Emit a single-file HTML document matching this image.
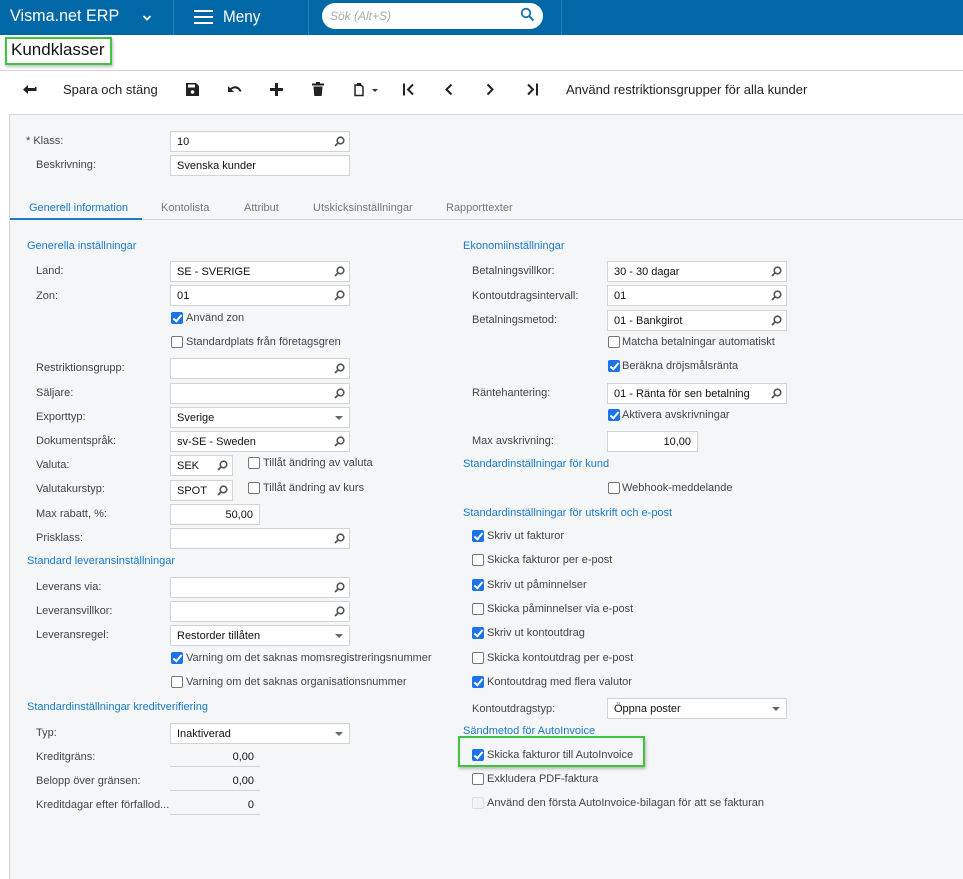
<!DOCTYPE html>
<html><head><meta charset="utf-8">
<style>
*{margin:0;padding:0;box-sizing:border-box}
body{width:963px;height:879px;overflow:hidden;background:#fff;font-family:"Liberation Sans",Arial,sans-serif;position:relative}
.a{position:absolute}
.top{left:0;top:0;width:963px;height:35px;background:#0168a7}
.l{position:absolute;font-size:11px;color:#444;white-space:nowrap;line-height:14px}
.h{position:absolute;font-size:11px;color:#1a7ac9;white-space:nowrap;line-height:14px}
.i{position:absolute;height:21px;border:1px solid #d0d3d7;background:#fff;font-size:11px;line-height:19px;padding-top:1px;padding-left:6px;color:#111;white-space:nowrap}
.r{text-align:right;padding-right:6px}
.u{position:absolute;height:21px;border-bottom:1px solid #d0d3d7;font-size:11px;line-height:22px;text-align:right;padding-right:6px;color:#111}
.s{position:absolute;right:4px;top:4px;width:11px;height:11px}
.d{position:absolute;right:6px;top:8px;width:0;height:0;border-left:4px solid transparent;border-right:4px solid transparent;border-top:4px solid #666}
.c{position:absolute;width:12px;height:12px;border:1px solid #777;border-radius:2px;background:#fff}
.c.k{background:#1a73e8;border-color:#1a73e8}
.c.k::after{content:"";position:absolute;left:3px;top:0px;width:3px;height:7px;border:solid #fff;border-width:0 2px 2px 0;transform:rotate(40deg)}
.c.x{border-color:#ddd;background:#f3f3f3}
.cl{position:absolute;font-size:11px;color:#444;white-space:nowrap;line-height:14px}
.tb{position:absolute;top:82px;font-size:13px;color:#222}
</style></head><body>
<div class="a top"></div>
<div class="a" style="left:10px;top:6px;font-size:17px;color:#fff;transform:scaleX(0.95);transform-origin:0 0">Visma.net ERP</div>
<svg class="a" style="left:142px;top:14px" width="10" height="8" viewBox="0 0 10 8"><path d="M1.5 2 L5 5.5 L8.5 2" stroke="#fff" stroke-width="1.8" fill="none"/></svg>
<div class="a" style="left:173px;top:0;width:1px;height:35px;background:#2b7fb7"></div>
<div class="a" style="left:308px;top:0;width:1px;height:35px;background:#2b7fb7"></div>
<div class="a" style="left:561px;top:0;width:1px;height:35px;background:#2b7fb7"></div>
<svg class="a" style="left:194px;top:10px" width="19" height="14"><rect y="0" width="19" height="2" fill="#fff"/><rect y="6" width="19" height="2" fill="#fff"/><rect y="12" width="19" height="2" fill="#fff"/></svg>
<div class="a" style="left:223px;top:7px;font-size:17px;color:#fff;transform:scaleX(0.9);transform-origin:0 0">Meny</div>
<div class="a" style="left:322px;top:3px;width:221px;height:26px;background:#fff;border-radius:13px"></div>
<div class="a" style="left:330px;top:9px;font-size:12px;color:#aaa;font-style:italic">Sök (Alt+S)</div>
<svg class="a" style="left:520px;top:7px" width="15" height="15" viewBox="0 0 15 15"><circle cx="6" cy="6" r="4.3" stroke="#1a6fb0" stroke-width="1.8" fill="none"/><path d="M9.2 9.2 L13.5 13.5" stroke="#1a6fb0" stroke-width="2"/></svg>

<div class="a" style="left:5px;top:37px;width:107px;height:28px;border:2px solid #3ec43e;box-shadow:1px 2px 3px rgba(0,0,0,.25)"></div>
<div class="a" style="left:11px;top:40px;font-size:17px;color:#111">Kundklasser</div>
<div class="a" style="left:0;top:70px;width:963px;height:1px;background:#d6d6d6"></div>

<svg class="a" style="left:22px;top:84px" width="15" height="11" viewBox="0 0 15 11"><path d="M1 5.5 L6 1 V4 H13 V3 H14.5 V7 H6 V10 Z" fill="#222"/></svg>
<div class="tb" style="left:63px">Spara och stäng</div>
<svg class="a" style="left:186px;top:83px" width="13" height="13" viewBox="0 0 13 13"><path d="M0 0 H10 L13 3 V13 H0 Z" fill="#222"/><rect x="2" y="1.5" width="7" height="3" fill="#fff"/><circle cx="6.5" cy="9" r="1.8" fill="#fff"/></svg>
<svg class="a" style="left:227px;top:84px" width="15" height="11" viewBox="0 0 15 11"><path d="M1 2 V8 H7 L4.5 5.5 C7 3.5 11 4 13 8 L14.5 7 C12 1.5 7 1 3.3 4.3 Z" fill="#222"/></svg>
<svg class="a" style="left:270px;top:83px" width="13" height="13"><rect x="5" y="0" width="3" height="13" fill="#222"/><rect x="0" y="5" width="13" height="3" fill="#222"/></svg>
<svg class="a" style="left:312px;top:82px" width="12" height="14" viewBox="0 0 12 14"><rect x="0" y="1.5" width="12" height="2" fill="#222"/><rect x="4" y="0" width="4" height="2" fill="#222"/><path d="M1.5 4.5 H10.5 L9.7 14 H2.3 Z" fill="#222"/></svg>
<svg class="a" style="left:353px;top:82px" width="26" height="15" viewBox="0 0 26 15"><path d="M2 3 H8 L10 5 V13.5 H2 Z" stroke="#222" stroke-width="1.5" fill="none"/><rect x="4" y="1" width="4" height="3" fill="#222"/><path d="M19 7 H25 L22 10 Z" fill="#333"/></svg>
<svg class="a" style="left:402px;top:83px" width="13" height="13" viewBox="0 0 13 13"><rect x="1" y="0.5" width="2" height="12" fill="#222"/><path d="M11 1.5 L6 6.5 L11 11.5" stroke="#222" stroke-width="2" fill="none"/></svg>
<svg class="a" style="left:444px;top:83px" width="10" height="13" viewBox="0 0 10 13"><path d="M7.5 1.5 L2.5 6.5 L7.5 11.5" stroke="#222" stroke-width="2" fill="none"/></svg>
<svg class="a" style="left:485px;top:83px" width="10" height="13" viewBox="0 0 10 13"><path d="M2.5 1.5 L7.5 6.5 L2.5 11.5" stroke="#222" stroke-width="2" fill="none"/></svg>
<svg class="a" style="left:526px;top:83px" width="14" height="13" viewBox="0 0 14 13"><path d="M2 1.5 L7 6.5 L2 11.5" stroke="#222" stroke-width="2" fill="none"/><rect x="10" y="0.5" width="2" height="12" fill="#222"/></svg>
<div class="tb" style="left:566px">Använd restriktionsgrupper för alla kunder</div>

<div class="a" style="left:9px;top:114px;width:954px;height:765px;background:#f5f6f8;border-left:1px solid #d4d6da;border-top:1px solid #d4d6da"></div>

<div class="l" style="left:26px;top:134px">*&nbsp;Klass:</div>
<div class="i" style="left:170px;top:131px;width:180px">10<svg class="s" viewBox="0 0 11 11"><circle cx="6.5" cy="4.5" r="3.3" stroke="#555" stroke-width="1.6" fill="none"/><path d="M4.2 6.8 L1 10" stroke="#555" stroke-width="1.8"/></svg></div>
<div class="l" style="left:36px;top:158px">Beskrivning:</div>
<div class="i" style="left:170px;top:155px;width:180px">Svenska kunder</div>

<div class="a" style="left:10px;top:219px;width:953px;height:1px;background:#d4d6da"></div>
<div class="a" style="left:10px;top:218px;width:132px;height:2px;background:#1a7ac9"></div>
<div class="a" style="left:29px;top:202px;font-size:11px;color:#1a7ac9">Generell information</div>
<div class="a" style="left:161px;top:202px;font-size:11px;color:#777">Kontolista</div>
<div class="a" style="left:244px;top:202px;font-size:11px;color:#777">Attribut</div>
<div class="a" style="left:313px;top:202px;font-size:11px;color:#777">Utskicksinställningar</div>
<div class="a" style="left:446px;top:202px;font-size:11px;color:#777">Rapporttexter</div>

<!-- Left column -->
<div class="h" style="left:27px;top:239px">Generella inställningar</div>
<div class="l" style="left:36px;top:264px">Land:</div>
<div class="i" style="left:170px;top:261px;width:180px">SE - SVERIGE<svg class="s" viewBox="0 0 11 11"><circle cx="6.5" cy="4.5" r="3.3" stroke="#555" stroke-width="1.6" fill="none"/><path d="M4.2 6.8 L1 10" stroke="#555" stroke-width="1.8"/></svg></div>
<div class="l" style="left:36px;top:289px">Zon:</div>
<div class="i" style="left:170px;top:285px;width:180px">01<svg class="s" viewBox="0 0 11 11"><circle cx="6.5" cy="4.5" r="3.3" stroke="#555" stroke-width="1.6" fill="none"/><path d="M4.2 6.8 L1 10" stroke="#555" stroke-width="1.8"/></svg></div>
<div class="c k" style="left:171px;top:312px"></div><div class="cl" style="left:186px;top:311px">Använd zon</div>
<div class="c" style="left:171px;top:336px"></div><div class="cl" style="left:186px;top:335px">Standardplats från företagsgren</div>
<div class="l" style="left:36px;top:361px">Restriktionsgrupp:</div>
<div class="i" style="left:170px;top:358px;width:180px"><svg class="s" viewBox="0 0 11 11"><circle cx="6.5" cy="4.5" r="3.3" stroke="#555" stroke-width="1.6" fill="none"/><path d="M4.2 6.8 L1 10" stroke="#555" stroke-width="1.8"/></svg></div>
<div class="l" style="left:36px;top:386px">Säljare:</div>
<div class="i" style="left:170px;top:383px;width:180px"><svg class="s" viewBox="0 0 11 11"><circle cx="6.5" cy="4.5" r="3.3" stroke="#555" stroke-width="1.6" fill="none"/><path d="M4.2 6.8 L1 10" stroke="#555" stroke-width="1.8"/></svg></div>
<div class="l" style="left:36px;top:410px">Exporttyp:</div>
<div class="i" style="left:170px;top:407px;width:180px">Sverige<div class="d"></div></div>
<div class="l" style="left:36px;top:434px">Dokumentspråk:</div>
<div class="i" style="left:170px;top:431px;width:180px">sv-SE - Sweden<svg class="s" viewBox="0 0 11 11"><circle cx="6.5" cy="4.5" r="3.3" stroke="#555" stroke-width="1.6" fill="none"/><path d="M4.2 6.8 L1 10" stroke="#555" stroke-width="1.8"/></svg></div>
<div class="l" style="left:36px;top:458px">Valuta:</div>
<div class="i" style="left:170px;top:455px;width:63px">SEK<svg class="s" viewBox="0 0 11 11"><circle cx="6.5" cy="4.5" r="3.3" stroke="#555" stroke-width="1.6" fill="none"/><path d="M4.2 6.8 L1 10" stroke="#555" stroke-width="1.8"/></svg></div>
<div class="c" style="left:248px;top:457px"></div><div class="cl" style="left:263px;top:456px">Tillåt ändring av valuta</div>
<div class="l" style="left:36px;top:482px">Valutakurstyp:</div>
<div class="i" style="left:170px;top:480px;width:63px">SPOT<svg class="s" viewBox="0 0 11 11"><circle cx="6.5" cy="4.5" r="3.3" stroke="#555" stroke-width="1.6" fill="none"/><path d="M4.2 6.8 L1 10" stroke="#555" stroke-width="1.8"/></svg></div>
<div class="c" style="left:248px;top:482px"></div><div class="cl" style="left:263px;top:481px">Tillåt ändring av kurs</div>
<div class="l" style="left:36px;top:507px">Max rabatt, %:</div>
<div class="i r" style="left:170px;top:504px;width:90px">50,00</div>
<div class="l" style="left:36px;top:531px">Prisklass:</div>
<div class="i" style="left:170px;top:528px;width:180px"><svg class="s" viewBox="0 0 11 11"><circle cx="6.5" cy="4.5" r="3.3" stroke="#555" stroke-width="1.6" fill="none"/><path d="M4.2 6.8 L1 10" stroke="#555" stroke-width="1.8"/></svg></div>
<div class="h" style="left:27px;top:554px">Standard leveransinställningar</div>
<div class="l" style="left:36px;top:580px">Leverans via:</div>
<div class="i" style="left:170px;top:577px;width:180px"><svg class="s" viewBox="0 0 11 11"><circle cx="6.5" cy="4.5" r="3.3" stroke="#555" stroke-width="1.6" fill="none"/><path d="M4.2 6.8 L1 10" stroke="#555" stroke-width="1.8"/></svg></div>
<div class="l" style="left:36px;top:604px">Leveransvillkor:</div>
<div class="i" style="left:170px;top:601px;width:180px"><svg class="s" viewBox="0 0 11 11"><circle cx="6.5" cy="4.5" r="3.3" stroke="#555" stroke-width="1.6" fill="none"/><path d="M4.2 6.8 L1 10" stroke="#555" stroke-width="1.8"/></svg></div>
<div class="l" style="left:36px;top:628px">Leveransregel:</div>
<div class="i" style="left:170px;top:625px;width:180px">Restorder tillåten<div class="d"></div></div>
<div class="c k" style="left:171px;top:652px"></div><div class="cl" style="left:186px;top:651px">Varning om det saknas momsregistreringsnummer</div>
<div class="c" style="left:171px;top:676px"></div><div class="cl" style="left:186px;top:675px">Varning om det saknas organisationsnummer</div>
<div class="h" style="left:27px;top:700px">Standardinställningar kreditverifiering</div>
<div class="l" style="left:36px;top:726px">Typ:</div>
<div class="i" style="left:170px;top:723px;width:180px">Inaktiverad<div class="d"></div></div>
<div class="l" style="left:36px;top:750px">Kreditgräns:</div>
<div class="u" style="left:170px;top:746px;width:90px">0,00</div>
<div class="l" style="left:36px;top:774px">Belopp över gränsen:</div>
<div class="u" style="left:170px;top:770px;width:90px">0,00</div>
<div class="l" style="left:36px;top:798px">Kreditdagar efter förfallod...</div>
<div class="u" style="left:170px;top:794px;width:90px">0</div>

<!-- Right column -->
<div class="h" style="left:463px;top:239px">Ekonomiinställningar</div>
<div class="l" style="left:472px;top:264px">Betalningsvillkor:</div>
<div class="i" style="left:607px;top:261px;width:180px">30 - 30 dagar<svg class="s" viewBox="0 0 11 11"><circle cx="6.5" cy="4.5" r="3.3" stroke="#555" stroke-width="1.6" fill="none"/><path d="M4.2 6.8 L1 10" stroke="#555" stroke-width="1.8"/></svg></div>
<div class="l" style="left:472px;top:289px">Kontoutdragsintervall:</div>
<div class="i" style="left:607px;top:285px;width:180px">01<svg class="s" viewBox="0 0 11 11"><circle cx="6.5" cy="4.5" r="3.3" stroke="#555" stroke-width="1.6" fill="none"/><path d="M4.2 6.8 L1 10" stroke="#555" stroke-width="1.8"/></svg></div>
<div class="l" style="left:472px;top:313px">Betalningsmetod:</div>
<div class="i" style="left:607px;top:310px;width:180px">01 - Bankgirot<svg class="s" viewBox="0 0 11 11"><circle cx="6.5" cy="4.5" r="3.3" stroke="#555" stroke-width="1.6" fill="none"/><path d="M4.2 6.8 L1 10" stroke="#555" stroke-width="1.8"/></svg></div>
<div class="c" style="left:608px;top:336px"></div><div class="cl" style="left:622px;top:335px">Matcha betalningar automatiskt</div>
<div class="c k" style="left:608px;top:360px"></div><div class="cl" style="left:622px;top:359px">Beräkna dröjsmålsränta</div>
<div class="l" style="left:472px;top:386px">Räntehantering:</div>
<div class="i" style="left:607px;top:383px;width:180px">01 - Ränta för sen betalning<svg class="s" viewBox="0 0 11 11"><circle cx="6.5" cy="4.5" r="3.3" stroke="#555" stroke-width="1.6" fill="none"/><path d="M4.2 6.8 L1 10" stroke="#555" stroke-width="1.8"/></svg></div>
<div class="c k" style="left:608px;top:409px"></div><div class="cl" style="left:622px;top:408px">Aktivera avskrivningar</div>
<div class="l" style="left:472px;top:434px">Max avskrivning:</div>
<div class="i r" style="left:607px;top:431px;width:91px">10,00</div>
<div class="h" style="left:463px;top:457px">Standardinställningar för kund</div>
<div class="c" style="left:608px;top:482px"></div><div class="cl" style="left:622px;top:481px">Webhook-meddelande</div>
<div class="h" style="left:463px;top:506px">Standardinställningar för utskrift och e-post</div>
<div class="c k" style="left:472px;top:530px"></div><div class="cl" style="left:487px;top:529px">Skriv ut fakturor</div>
<div class="c" style="left:472px;top:554px"></div><div class="cl" style="left:487px;top:553px">Skicka fakturor per e-post</div>
<div class="c k" style="left:472px;top:579px"></div><div class="cl" style="left:487px;top:578px">Skriv ut påminnelser</div>
<div class="c" style="left:472px;top:603px"></div><div class="cl" style="left:487px;top:602px">Skicka påminnelser via e-post</div>
<div class="c k" style="left:472px;top:627px"></div><div class="cl" style="left:487px;top:626px">Skriv ut kontoutdrag</div>
<div class="c" style="left:472px;top:652px"></div><div class="cl" style="left:487px;top:651px">Skicka kontoutdrag per e-post</div>
<div class="c k" style="left:472px;top:676px"></div><div class="cl" style="left:487px;top:675px">Kontoutdrag med flera valutor</div>
<div class="l" style="left:472px;top:702px">Kontoutdragstyp:</div>
<div class="i" style="left:607px;top:698px;width:180px">Öppna poster<div class="d"></div></div>
<div class="h" style="left:463px;top:724px">Sändmetod för AutoInvoice</div>
<div class="a" style="left:458px;top:736px;width:187px;height:31px;border:2px solid #3ec43e;box-shadow:1px 2px 3px rgba(0,0,0,.25)"></div>
<div class="c k" style="left:472px;top:749px"></div><div class="cl" style="left:487px;top:748px">Skicka fakturor till AutoInvoice</div>
<div class="c" style="left:472px;top:773px"></div><div class="cl" style="left:487px;top:772px">Exkludera PDF-faktura</div>
<div class="c x" style="left:472px;top:797px"></div><div class="cl" style="left:487px;top:796px">Använd den första AutoInvoice-bilagan för att se fakturan</div>
</body></html>
